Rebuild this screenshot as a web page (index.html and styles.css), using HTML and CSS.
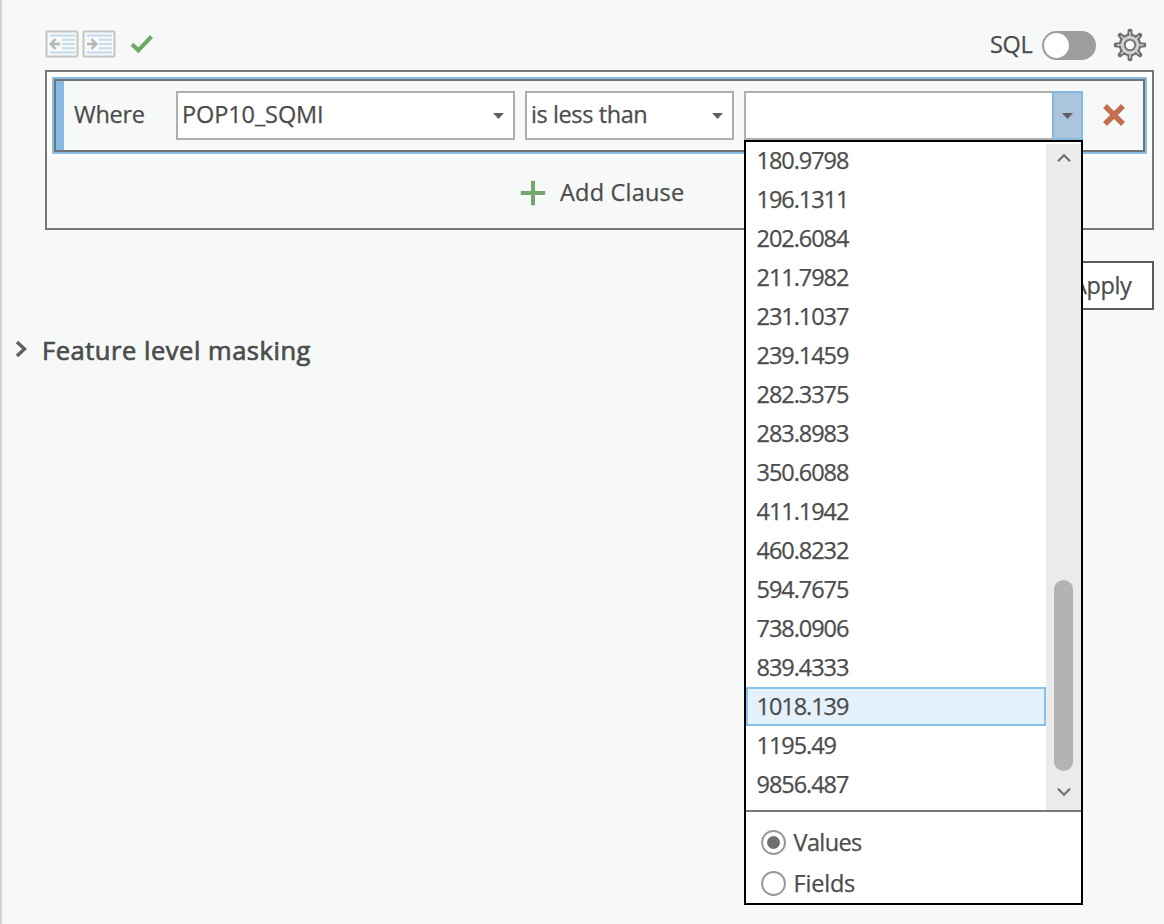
FILE: index.html
```html
<!DOCTYPE html>
<html lang="en">
<head>
<meta charset="utf-8">
<title>Query builder</title>
<link rel="stylesheet" href="styles.css">
</head>
<body>
<main class="pane">
  <header class="toolbar">
    <div class="tools">
      <svg class="indent" width="34" height="28" viewBox="0 0 34 28" fill="none"><rect x="1.5" y="1.5" width="31" height="25" rx="1" stroke="#c2c5c4" stroke-width="2"/><path d="M5 5.5h25M17 9.7h13M17 14h13M17 18.3h13M5 22.5h25" stroke="#c5dced" stroke-width="2"/><path d="M15 14H6M10.5 9.2 5.7 14l4.8 4.8" stroke="#b5b8b7" stroke-width="2.5"/></svg>
      <svg class="indent" width="34" height="28" viewBox="0 0 34 28" fill="none"><rect x="1.5" y="1.5" width="31" height="25" rx="1" stroke="#c2c5c4" stroke-width="2"/><path d="M5 5.5h25M17 9.7h13M17 14h13M17 18.3h13M5 22.5h25" stroke="#c5dced" stroke-width="2"/><path d="M5 14h9M9.5 9.2l4.8 4.8-4.8 4.8" stroke="#b5b8b7" stroke-width="2.5"/></svg>
      <svg class="check" width="24" height="20" viewBox="0 0 24 20"><path d="M2 10.2 8.3 16.3 21.5 2.5" fill="none" stroke="#71a66a" stroke-width="4"/></svg>
    </div>
    <div class="options">
      <span class="sql">SQL</span>
      <span class="toggle"><span class="knob"></span></span>
      <svg class="gear" width="34" height="34" viewBox="0 0 34 34"><g fill="#707070" stroke="none"><path id="t" d="M14.2 7 14.8 1.4Q17 0 19.2 1.4L19.8 7z"/><use href="#t" transform="rotate(45 17 17)"/><use href="#t" transform="rotate(90 17 17)"/><use href="#t" transform="rotate(135 17 17)"/><use href="#t" transform="rotate(180 17 17)"/><use href="#t" transform="rotate(225 17 17)"/><use href="#t" transform="rotate(270 17 17)"/><use href="#t" transform="rotate(315 17 17)"/></g><circle cx="17" cy="17" r="10.2" fill="#d1d2d2" stroke="#707070" stroke-width="2"/><path d="M17 3.8v6M17 24.2v6M3.8 17h6M24.2 17h6M8 8l4 4M22 22l4 4M26 8l-4 4M8 26l4-4" stroke="#d1d2d2" stroke-width="1.5"/><circle cx="17" cy="17" r="5.3" fill="#f9fafa" stroke="#777" stroke-width="2"/></svg>
    </div>
  </header>

  <section class="query">
    <div class="clause-wrap">
      <div class="clause">
        <span class="where">Where</span>
        <div class="combo field"><span>POP10_SQMI</span><i class="caret"></i></div>
        <div class="combo operator"><span>is less than</span><i class="caret"></i></div>
        <div class="combo value">
          <div class="drop"><i class="caret"></i></div>
          <div class="popup">
            <div class="list">
              <ul class="items">
                <li>180.9798</li><li>196.1311</li><li>202.6084</li><li>211.7982</li><li>231.1037</li><li>239.1459</li><li>282.3375</li><li>283.8983</li><li>350.6088</li><li>411.1942</li><li>460.8232</li><li>594.7675</li><li>738.0906</li><li>839.4333</li><li class="active">1018.139</li><li>1195.49</li><li>9856.487</li>
              </ul>
              <div class="scrollbar">
                <svg width="16" height="10" viewBox="0 0 16 10"><path d="M2 8.2 8 2.2l6 6" fill="none" stroke="#707070" stroke-width="2.2"/></svg>
                <div class="thumb"></div>
                <svg width="16" height="10" viewBox="0 0 16 10"><path d="m2 1.8 6 6 6-6" fill="none" stroke="#707070" stroke-width="2.2"/></svg>
              </div>
            </div>
            <div class="radios">
              <div class="radio"><i class="dot on"></i><span>Values</span></div>
              <div class="radio"><i class="dot"></i><span>Fields</span></div>
            </div>
          </div>
        </div>
        <svg class="remove" width="24" height="24" viewBox="0 0 24 24"><path d="m3 3 18 18M21 3 3 21" stroke="#c16e51" stroke-width="5.4"/></svg>
      </div>
    </div>
    <div class="add">
      <svg width="26" height="26" viewBox="0 0 26 26"><path d="M13 .8v24.4M.8 13h24.4" stroke="#72a869" stroke-width="4"/></svg>
      <span>Add Clause</span>
    </div>
  </section>

  <div class="actions"><div class="apply"><span>Apply</span></div></div>

  <div class="section">
    <svg width="13" height="18" viewBox="0 0 13 18"><path d="m2 2 7.5 7L2 16" fill="none" stroke="#606060" stroke-width="3.4"/></svg>
    <span>Feature level masking</span>
  </div>
</main>
</body>
</html>
```
FILE: styles.css
```css
* { box-sizing: border-box; }
body {
  margin: 0;
  background: #f7f9f8;
  color: #4c4c4c;
  font: 23.5px/30px "Open Sans", "Noto Sans", sans-serif;
  white-space: nowrap;
  -webkit-text-stroke: .25px #4c4c4c;
}
svg { display: block; flex: none; }
.pane {
  height: 924px;
  overflow: hidden;
  border-left: 2px solid #d2d2d2;
  padding: 25px 10px 0 43px;
}
.toolbar {
  display: flex;
  justify-content: space-between;
  height: 45px;
}
.tools, .options { display: flex; align-items: center; height: 37px; }
.indent { margin-right: 3px; }
.check { margin-left: 11px; }
.sql { width: 52px; letter-spacing: -.3px; }
.toggle {
  width: 54px;
  height: 29px;
  margin-top: 3px;
  border-radius: 15px;
  background: #9d9d9d;
  padding: 2px;
}
.knob { display: block; width: 25px; height: 25px; border-radius: 50%; background: #fff; }
.gear { margin: 3px 7px 0 17px; }
.query { height: 160px; border: 2px solid #777; }
.clause-wrap { padding: 7px 7px 5px 7px; background: #fff; }
.clause {
  display: flex;
  height: 73px;
  border: 2px solid #707477;
  outline: 2px solid #86bee6;
  background: linear-gradient(90deg, #86bce3 8px, #f7f9f8 8px);
  padding: 10px 0 0 18px;
}
.where { width: 102px; padding-top: 8px; letter-spacing: -.3px; }
.combo {
  display: flex;
  height: 49px;
  border: 2px solid #adafae;
  background: #fff;
  justify-content: space-between;
  padding: 7px 9px 0 5px;
}
.caret {
  display: block;
  margin-top: 13px;
  width: 11px;
  height: 6px;
  background: #606060;
  clip-path: polygon(0 0, 100% 0, 50% 100%);
}
.field { width: 339px; margin-right: 10px; letter-spacing: -.1px; }
.operator { width: 209px; margin-right: 10px; letter-spacing: -.4px; }
.combo > span { margin: -1px 0 0 -1px; }
.value { width: 339px; position: relative; padding: 0; justify-content: flex-end; }
.drop {
  width: 31px;
  height: 49px;
  margin: -2px -2px 0 0;
  border: 2px solid #88b8df;
  background: #abc5dd;
  padding: 7px 0 0 8px;
}
.popup {
  position: absolute;
  z-index: 2;
  left: -2px;
  top: 47px;
  width: 339px;
  height: 765px;
  border: 2px solid #000;
  background: #fff;
}
.list { display: flex; height: 670px; border-bottom: 2px solid #777; }
.items { flex: 1; list-style: none; margin: -1px 0 0; padding: 0; letter-spacing: -1.05px; }
.items li { height: 39px; padding: 4px 10.5px; }
.items .active {
  background: #e5f1fa;
  box-shadow: inset 0 0 0 2px #86c2e9;
}
.scrollbar {
  width: 35px;
  margin-top: 2px;
  background: #ebebeb;
  display: flex;
  flex-direction: column;
  align-items: center;
  justify-content: flex-end;
  padding: 9px 0 13px;
}
.scrollbar svg:first-child { margin-bottom: auto; }
.thumb { width: 19px; height: 191px; border-radius: 10px; background: #b3b3b3; margin-bottom: 16px; }
.radios { padding: 10px 14.5px; }
.radio { display: flex; align-items: center; height: 41px; letter-spacing: -.6px; }
.radio + .radio { letter-spacing: -.2px; }
.radio span { margin-top: -2px; }
.dot {
  display: grid;
  place-items: center;
  width: 25px;
  height: 25px;
  border: 2px solid #999;
  border-radius: 50%;
  margin-right: 8px;
}
.on::after { content: ""; width: 13px; height: 13px; border-radius: 50%; background: #6d6f70; }
.remove { margin: 12px 0 0 19px; }
.add { display: flex; align-items: center; padding: 22px 0 0 473px; letter-spacing: .2px; }
.add span { margin: -2px 0 0 14px; }
.actions { display: flex; justify-content: flex-end; margin-top: 31px; }
.apply {
  width: 99px;
  height: 49px;
  border: 2px solid #5a5a5a;
  background: #fff;
  padding: 7px 0 0 15px;
  letter-spacing: -.4px;
}
.section {
  display: flex;
  align-items: center;
  margin: 23px 0 0 -30px;
  font-size: 25.5px;
  letter-spacing: .53px;
  -webkit-text-stroke: .7px #4c4c4c;
}
.section span { margin: 2px 0 0 14px; }
```
